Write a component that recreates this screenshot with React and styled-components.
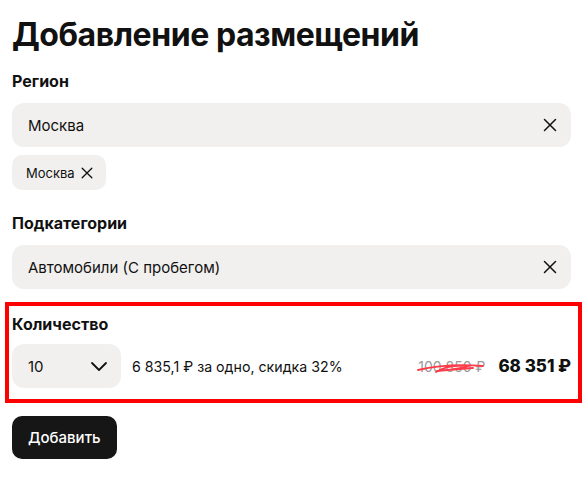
import React from "react";
import styled, { createGlobalStyle } from "styled-components";

const GlobalStyle = createGlobalStyle`
  body {
    margin: 0;
    background: #ffffff;
    font-family: Inter, "Noto Sans", sans-serif;
    color: #111111;
  }
`;

const Page = styled.div`
  width: 587px;
  padding: 13px 16px 0 12px;
  box-sizing: border-box;
`;

const Title = styled.h1`
  margin: 0 0 14px 0;
  font-size: 32px;
  font-weight: 700;
  letter-spacing: -0.45px;
  line-height: 44px;
`;

const Label = styled.div`
  font-size: 16px;
  font-weight: 700;
  line-height: 20px;
  margin-bottom: ${(p) => p.$gap || 12}px;
`;

const Field = styled.div`
  display: flex;
  align-items: center;
  justify-content: space-between;
  height: 44px;
  padding: 0 13px 0 16px;
  box-sizing: border-box;
  background: #f1f0ee;
  border-radius: 12px;
  font-size: 15px;
`;

const Chip = styled.div`
  display: inline-flex;
  align-items: center;
  gap: 5px;
  height: 35px;
  margin-top: 8px;
  padding: 0 12px 0 14px;
  background: #f1f0ee;
  border-radius: 10px;
  font-size: 13px;
`;

const Section = styled.div`
  margin-bottom: ${(p) => p.$gap || 0}px;
`;

const Highlight = styled.div`
  margin: 13px -11px 0 -7px;
  padding: 8px 7px 11px 3px;
  border: 4px solid #ff0000;
`;

const QtyRow = styled.div`
  display: flex;
  align-items: center;
  gap: 11px;
`;

const Select = styled.div`
  display: flex;
  align-items: center;
  justify-content: space-between;
  width: 109px;
  height: 44px;
  padding: 0 13px 0 16px;
  box-sizing: border-box;
  background: #f1f0ee;
  border-radius: 12px;
  font-size: 15px;
`;

const Note = styled.div`
  flex: 1;
  font-size: 14.2px;
`;

const OldPrice = styled.span`
  position: relative;
  color: #9a9a9a;
  font-size: 14px;
  margin-right: 2px;
`;

const Scribble = styled.svg`
  position: absolute;
  left: -1px;
  top: 3px;
  width: 68px;
  height: 12px;
  overflow: visible;
`;

const NewPrice = styled.span`
  font-size: 17px;
  font-weight: 800;
`;

const Button = styled.button`
  margin-top: 13px;
  height: 43px;
  padding: 0 16px;
  border: none;
  border-radius: 10px;
  background: #161616;
  color: #ffffff;
  font-family: Inter, "Noto Sans", sans-serif;
  font-size: 15px;
  font-weight: 500;
`;

const Cross = ({ size = 16 }) => (
  <svg width={size} height={size} viewBox="0 0 16 16" fill="none">
    <path d="M2.5 2.5L13.5 13.5M13.5 2.5L2.5 13.5" stroke="#111" strokeWidth="1.5" strokeLinecap="round" />
  </svg>
);

const Chevron = () => (
  <svg width="18" height="18" viewBox="0 0 18 18" fill="none">
    <path d="M2 6L9 13L16 6" stroke="#111" strokeWidth="1.8" strokeLinecap="round" strokeLinejoin="round" />
  </svg>
);

export default function App() {
  return (
    <>
      <GlobalStyle />
      <Page>
        <Title>Добавление размещений</Title>
        <Section $gap={23}>
          <Label>Регион</Label>
          <Field>
            <span>Москва</span>
            <Cross />
          </Field>
          <Chip>
            Москва <Cross size={14} />
          </Chip>
        </Section>
        <Section>
          <Label>Подкатегории</Label>
          <Field>
            <span>Автомобили (С пробегом)</span>
            <Cross />
          </Field>
        </Section>
        <Highlight>
          <Label $gap={10}>Количество</Label>
          <QtyRow>
            <Select>
              <span>10</span>
              <Chevron />
            </Select>
            <Note>6 835,1 ₽ за одно, скидка 32%</Note>
            <OldPrice>
              100 850 ₽
              <Scribble viewBox="0 0 68 12">
                <path
                  d="M1 9C18 5 40 3 66 5M19 11C27 6 40 4 52 5C44 7 30 9 20 10C30 9 42 8 56 7"
                  stroke="#ff3b4a"
                  strokeWidth="1.8"
                  fill="none"
                  strokeLinecap="round"
                  strokeLinejoin="round"
                />
              </Scribble>
            </OldPrice>
            <NewPrice>68 351 ₽</NewPrice>
          </QtyRow>
        </Highlight>
        <Button>Добавить</Button>
      </Page>
    </>
  );
}
